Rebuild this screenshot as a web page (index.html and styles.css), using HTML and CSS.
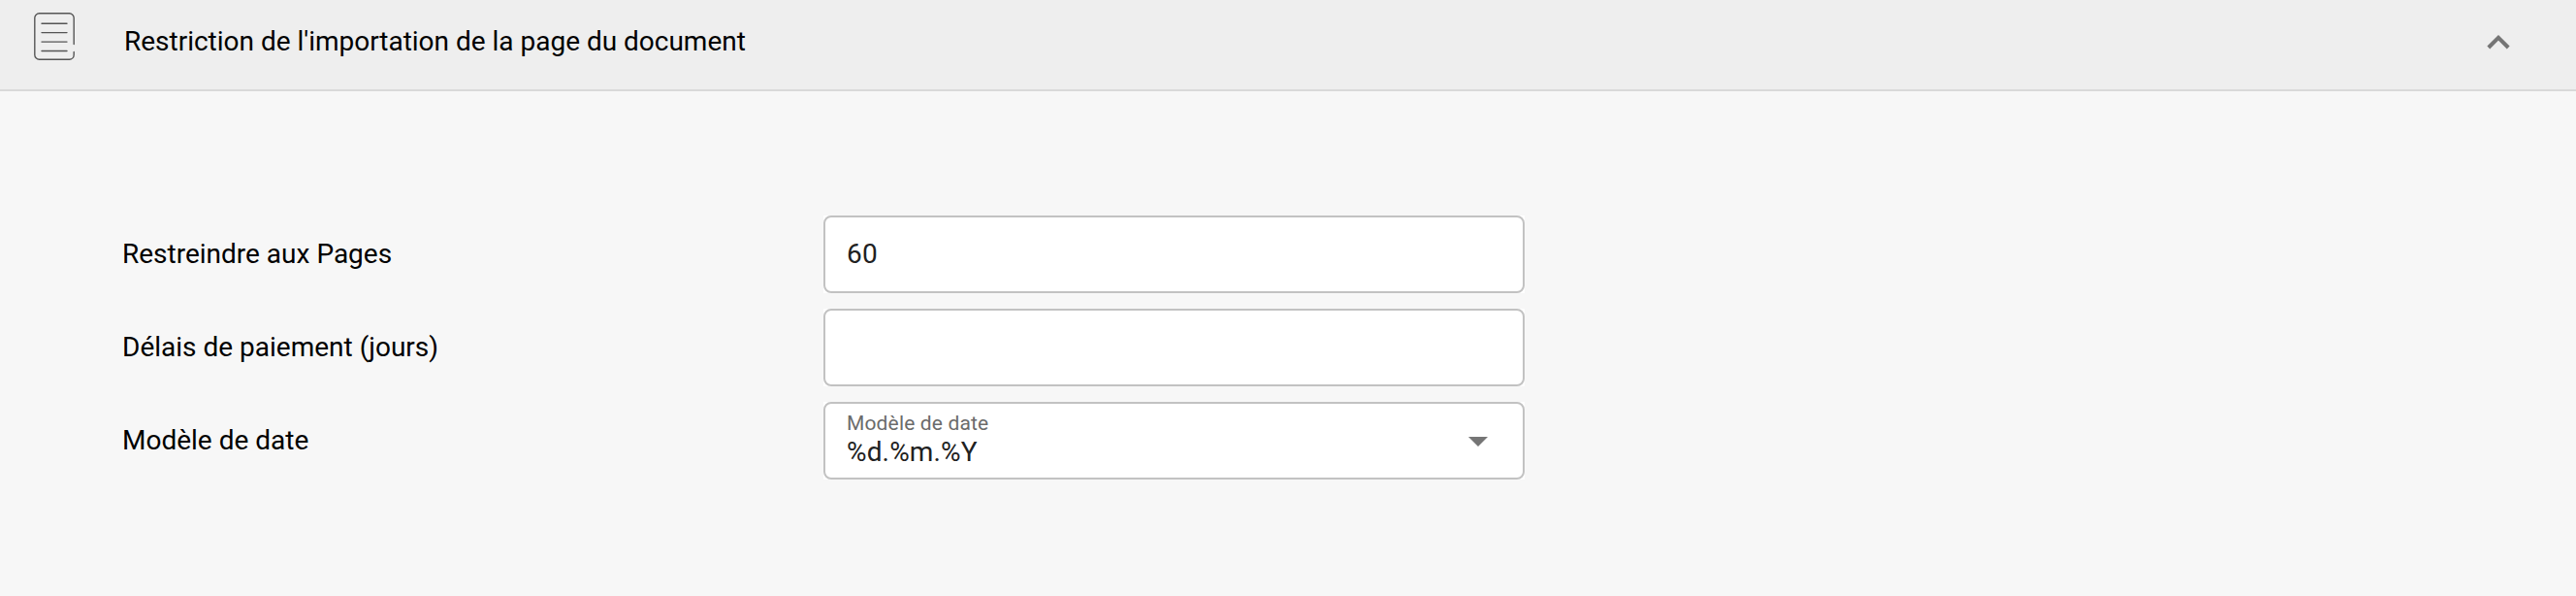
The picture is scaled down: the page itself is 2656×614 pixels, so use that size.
FILE: index.html
```html
<!DOCTYPE html>
<html lang="fr">
<head>
<meta charset="utf-8">
<title>Restriction de l'importation</title>
<link rel="stylesheet" href="styles.css">
</head>
<body>
<section class="panel">
  <header class="panel-header">
    <svg class="doc-icon" viewBox="0 0 42 49" aria-hidden="true">
      <path d="M41.2 32.500V5.500a4.700 4.700 0 0 0-4.700-4.700h-31A4.700 4.700 0 0 0 .8 5.500v38a4.700 4.700 0 0 0 4.700 4.700h31a4.700 4.700 0 0 0 4.700-4.700V40.500M8 11.200h26M8 20.600h26M8 30.100h26M8 39.500h26"/>
    </svg>
    <h1 class="panel-title">Restriction de l'importation de la page du document</h1>
    <svg class="chevron" viewBox="0 0 24 16" aria-hidden="true"><path d="M1.800 14 12 3.800 22.200 14"/></svg>
  </header>
  <form class="panel-body">
    <div class="row">
      <label class="row-label">Restreindre aux Pages</label>
      <div class="field"><div class="outline"><span class="value">60</span></div></div>
    </div>
    <div class="row">
      <label class="row-label">Délais de paiement (jours)</label>
      <div class="field"><div class="outline"></div></div>
    </div>
    <div class="row">
      <label class="row-label">Modèle de date</label>
      <div class="field"><div class="outline select">
        <div class="select-text">
          <span class="hint">Modèle de date</span>
          <span class="value">%d.%m.%Y</span>
        </div>
        <svg class="arrow" viewBox="0 0 20 10" aria-hidden="true"><path d="M0 0h20L10 10z"/></svg>
      </div></div>
    </div>
  </form>
</section>
</body>
</html>
```

FILE: styles.css
```css
* { box-sizing: border-box; }
body {
  margin: 0;
  background: #f7f7f7;
  color: #000;
  font-family: Roboto, "Liberation Sans", sans-serif;
  font-size: 28px;
}
.panel-header {
  display: flex;
  align-items: flex-start;
  height: 94px;
  padding: 0 68px 0 35px;
  background: #eee;
  border-bottom: 2px solid #d9d9d9;
}
.doc-icon {
  width: 42px;
  height: 49px;
  margin-top: 13px;
  fill: none;
  stroke: #555;
  stroke-width: 1.4;
  stroke-linecap: round;
}
.panel-title {
  margin: 26px 0 0 51px;
  font-size: 28px;
  font-weight: 400;
  line-height: 33px;
  letter-spacing: -0.01px;
}
.chevron {
  width: 24px;
  height: 16px;
  margin: 35px 0 0 auto;
  fill: none;
  stroke: #757575;
  stroke-width: 4;
}
.panel-body {
  display: flex;
  flex-direction: column;
  gap: 16px;
  padding: 128px 0 0 126px;
}
.row {
  display: grid;
  grid-template-columns: 723px 723px;
  align-items: start;
}
.row-label { padding-top: 23px; line-height: 33px; }
.field { height: 80px; background: #fff; }
.outline {
  display: flex;
  align-items: flex-start;
  height: 80px;
  padding: 21px 36px 0 22px;
  border: 2px solid #c2c2c2;
  border-radius: 8px;
}
.value {
  color: #212121;
  line-height: 33px;
  letter-spacing: 0.15px;
}
.select { justify-content: space-between; padding-top: 8px; }
.select-text { display: flex; flex-direction: column; }
.hint {
  color: #6b6b6b;
  font-size: 21px;
  line-height: 25px;
  letter-spacing: 0.15px;
}
.arrow { width: 20px; height: 10px; margin-top: 26px; fill: #757575; }
```
